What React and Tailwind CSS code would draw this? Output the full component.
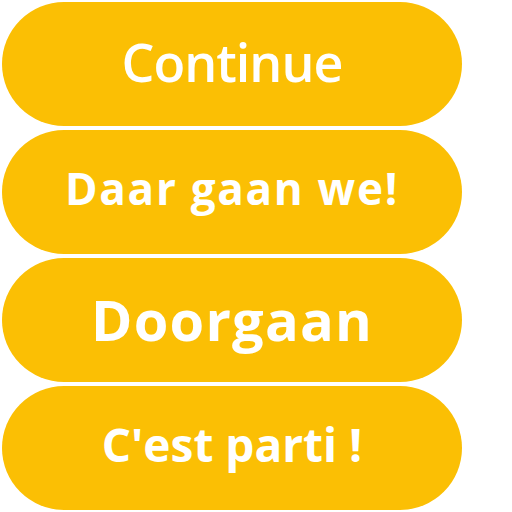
export default function App() {
  const btn =
    "w-[460px] h-[124px] rounded-full bg-[#fbbf04] flex items-center justify-center text-white leading-none";
  const font = { fontFamily: '"Open Sans", "Liberation Sans", sans-serif' };
  return (
    <div className="w-[512px] h-[512px] bg-white flex flex-col gap-[4px] p-[2px]" style={font}>
      <button className={btn + " font-semibold text-[52px] pb-[5px] tracking-[-1px]"}>Continue</button>
      <button className={btn + " font-bold text-[44px] pb-[9px] tracking-[1.7px]"}>Daar gaan we!</button>
      <button className={btn + " font-bold text-[56px] pb-[3px] tracking-[1.2px]"}>Doorgaan</button>
      <button className={btn + " font-bold text-[46px] pb-[8px] tracking-[0px]"}>C'est parti !</button>
    </div>
  );
}
